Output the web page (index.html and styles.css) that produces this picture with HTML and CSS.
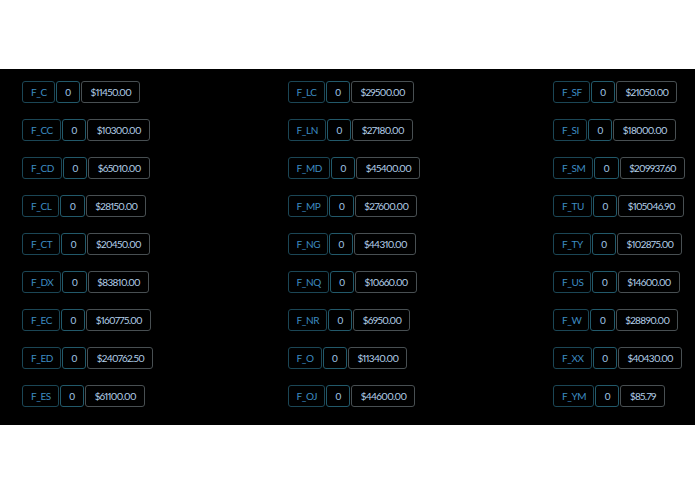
FILE: index.html
```html
<!DOCTYPE html>
<html>
<head>
<meta charset="utf-8">
<link rel="stylesheet" href="styles.css">
</head>
<body>
<div class="panel">
  <div class="col">
    <div class="item"><span class="lbl">F_C</span><span class="cnt">0</span><span class="val">$11450.00</span></div>
    <div class="item"><span class="lbl">F_CC</span><span class="cnt">0</span><span class="val">$10300.00</span></div>
    <div class="item"><span class="lbl">F_CD</span><span class="cnt">0</span><span class="val">$65010.00</span></div>
    <div class="item"><span class="lbl">F_CL</span><span class="cnt">0</span><span class="val">$28150.00</span></div>
    <div class="item"><span class="lbl">F_CT</span><span class="cnt">0</span><span class="val">$20450.00</span></div>
    <div class="item"><span class="lbl">F_DX</span><span class="cnt">0</span><span class="val">$83810.00</span></div>
    <div class="item"><span class="lbl">F_EC</span><span class="cnt">0</span><span class="val">$160775.00</span></div>
    <div class="item"><span class="lbl">F_ED</span><span class="cnt">0</span><span class="val">$240762.50</span></div>
    <div class="item"><span class="lbl">F_ES</span><span class="cnt">0</span><span class="val">$61100.00</span></div>
  </div>
  <div class="col">
    <div class="item"><span class="lbl">F_LC</span><span class="cnt">0</span><span class="val">$29500.00</span></div>
    <div class="item"><span class="lbl">F_LN</span><span class="cnt">0</span><span class="val">$27180.00</span></div>
    <div class="item"><span class="lbl">F_MD</span><span class="cnt">0</span><span class="val">$45400.00</span></div>
    <div class="item"><span class="lbl">F_MP</span><span class="cnt">0</span><span class="val">$27600.00</span></div>
    <div class="item"><span class="lbl">F_NG</span><span class="cnt">0</span><span class="val">$44310.00</span></div>
    <div class="item"><span class="lbl">F_NQ</span><span class="cnt">0</span><span class="val">$10660.00</span></div>
    <div class="item"><span class="lbl">F_NR</span><span class="cnt">0</span><span class="val">$6950.00</span></div>
    <div class="item"><span class="lbl">F_O</span><span class="cnt">0</span><span class="val">$11340.00</span></div>
    <div class="item"><span class="lbl">F_OJ</span><span class="cnt">0</span><span class="val">$44600.00</span></div>
  </div>
  <div class="col">
    <div class="item"><span class="lbl">F_SF</span><span class="cnt">0</span><span class="val">$21050.00</span></div>
    <div class="item"><span class="lbl">F_SI</span><span class="cnt">0</span><span class="val">$18000.00</span></div>
    <div class="item"><span class="lbl">F_SM</span><span class="cnt">0</span><span class="val">$209937.60</span></div>
    <div class="item"><span class="lbl">F_TU</span><span class="cnt">0</span><span class="val">$105046.90</span></div>
    <div class="item"><span class="lbl">F_TY</span><span class="cnt">0</span><span class="val">$102875.00</span></div>
    <div class="item"><span class="lbl">F_US</span><span class="cnt">0</span><span class="val">$14600.00</span></div>
    <div class="item"><span class="lbl">F_W</span><span class="cnt">0</span><span class="val">$28890.00</span></div>
    <div class="item"><span class="lbl">F_XX</span><span class="cnt">0</span><span class="val">$40430.00</span></div>
    <div class="item"><span class="lbl">F_YM</span><span class="cnt">0</span><span class="val">$85.79</span></div>
  </div>
</div>
</body>
</html>
```

FILE: styles.css
```css
html, body {
  margin: 0;
  padding: 0;
  background: #ffffff;
}
body {
  min-height: 100vh;
  display: flex;
  align-items: center;
  font-family: "Lato", "DejaVu Sans", sans-serif;
  font-size: 10px;
}
.panel {
  flex: 1;
  height: 356px;
  box-sizing: border-box;
  background: #000000;
  display: grid;
  grid-template-columns: repeat(3, 120px);
  justify-content: space-between;
  align-content: start;
  padding: 12px 22px 0 22px;
}
.col {
  display: flex;
  flex-direction: column;
  gap: 16px;
}
.item {
  display: flex;
  gap: 1px;
  height: 22px;
}
.item > span {
  display: flex;
  align-items: center;
  flex: none;
  box-sizing: border-box;
  height: 22px;
  border-width: 1px;
  border-style: solid;
  border-radius: 3px;
  padding: 0 8px 0 8.5px;
}
.item > .lbl {
  color: #3d8cc2;
  border-color: #1b4655;
  letter-spacing: -0.4px;
  padding: 0 7px 0 8px;
}
.item > .cnt {
  color: #a0c6e6;
  border-color: #22596a;
}
.item > .val {
  color: #b4d0ea;
  border-color: #484f52;
  letter-spacing: -0.7px;
  font-variant-numeric: proportional-nums;
}
```
